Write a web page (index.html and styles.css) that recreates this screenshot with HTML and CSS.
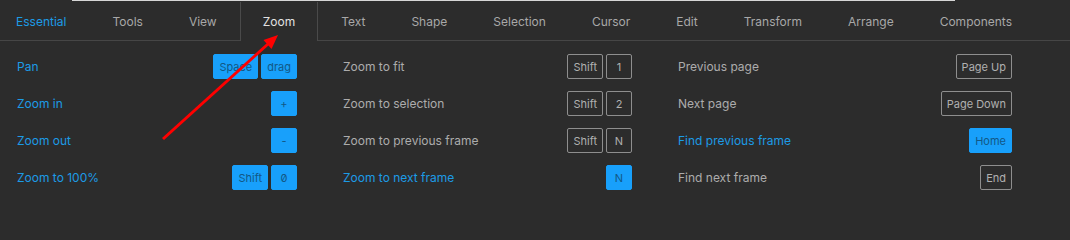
FILE: index.html
```html
<!DOCTYPE html>
<html lang="en">
<head>
    <meta charset="UTF-8">
    <title>Keyboard shortcuts</title>
    <link rel="stylesheet" href="styles.css">
</head>
<body>
    <div class="edge"></div>
    <div class="tabs">
        <div class="tab tab-blue">Essential</div>
        <div class="tab">Tools</div>
        <div class="tab">View</div>
        <div class="tab active">Zoom</div>
        <div class="tab">Text</div>
        <div class="tab">Shape</div>
        <div class="tab">Selection</div>
        <div class="tab">Cursor</div>
        <div class="tab">Edit</div>
        <div class="tab">Transform</div>
        <div class="tab">Arrange</div>
        <div class="tab">Components</div>
    </div>

    <div class="panel">
        <div class="col col-1">
            <div class="row blue"><span>Pan</span><span class="keys"><span class="key">Space</span><span class="key">drag</span></span></div>
            <div class="row blue"><span>Zoom in</span><span class="keys"><span class="key">+</span></span></div>
            <div class="row blue"><span>Zoom out</span><span class="keys"><span class="key">-</span></span></div>
            <div class="row blue"><span>Zoom to 100%</span><span class="keys"><span class="key">Shift</span><span class="key">0</span></span></div>
        </div>
        <div class="col col-2">
            <div class="row"><span>Zoom to fit</span><span class="keys"><span class="key">Shift</span><span class="key">1</span></span></div>
            <div class="row"><span>Zoom to selection</span><span class="keys"><span class="key">Shift</span><span class="key">2</span></span></div>
            <div class="row"><span>Zoom to previous frame</span><span class="keys"><span class="key">Shift</span><span class="key">N</span></span></div>
            <div class="row blue"><span>Zoom to next frame</span><span class="keys"><span class="key">N</span></span></div>
        </div>
        <div class="col col-3">
            <div class="row"><span>Previous page</span><span class="keys"><span class="key">Page Up</span></span></div>
            <div class="row"><span>Next page</span><span class="keys"><span class="key">Page Down</span></span></div>
            <div class="row blue"><span>Find previous frame</span><span class="keys"><span class="key">Home</span></span></div>
            <div class="row"><span>Find next frame</span><span class="keys"><span class="key">End</span></span></div>
        </div>
    </div>

    <!-- red annotation arrow pointing at the Zoom tab -->
    <svg class="arrow" width="1070" height="240" viewBox="0 0 1070 240">
        <line x1="163" y1="139" x2="268" y2="44" stroke="#f00" stroke-width="3"/>
        <polygon points="278,35 271.5,49 263.5,40" fill="#f00"/>
    </svg>
</body>
</html>
```

FILE: styles.css
```css
body {
    margin: 0;
    background-color: #2c2c2c;
    font-family: Inter, "Noto Sans", sans-serif;
    font-size: 12px;
    color: #acacac;
    position: relative;
    height: 240px;
    overflow: hidden;
}
.edge {
    height: 1px;
    width: 883px;
    margin-left: 72px;
    background-color: #d6d6d6;
}
.tabs {
    display: flex;
    height: 38px;
    padding-top: 1px;
    margin-left: -7px;
    border-bottom: 1px solid #464646;
}
.tab {
    display: flex;
    align-items: center;
    padding: 0 22px;
    border-left: 1px solid transparent;
    border-right: 1px solid transparent;
    color: #a8a8a8;
    white-space: nowrap;
}
.tab-blue {
    color: #1c9be6;
}
.tab.active {
    color: #e2e2e2;
    border-color: #4a4a4a;
    background-color: #2c2c2c;
    height: 39px;
    margin-bottom: -1px;
}
.panel {
    display: flex;
    gap: 46px;
    padding: 13px 0 0 17px;
}
.col {
    display: flex;
    flex-direction: column;
    gap: 12px;
}
.col-1 { width: 280px; }
.col-2 { width: 289px; }
.col-3 { width: 334px; }
.row {
    display: flex;
    align-items: center;
    justify-content: space-between;
    height: 25px;
}
.keys {
    display: flex;
    gap: 3px;
}
.key {
    box-sizing: border-box;
    height: 25px;
    min-width: 26px;
    padding: 0 5px;
    display: flex;
    align-items: center;
    justify-content: center;
    border: 1px solid #8e8e8e;
    border-radius: 2px;
    font-size: 11px;
    color: #b0b0b0;
    font-feature-settings: "zero" 1;
}
.row.blue {
    color: #1c9be6;
}
.row.blue .key {
    background-color: #18a0fb;
    border-color: #18a0fb;
    color: #125886;
}
.arrow {
    position: absolute;
    left: 0;
    top: 0;
    pointer-events: none;
}
```
